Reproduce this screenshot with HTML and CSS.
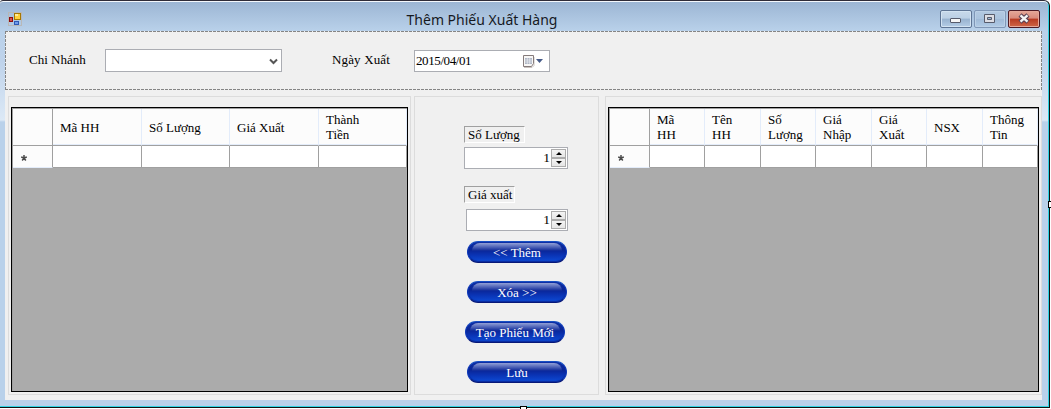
FILE: index.html
```html
<!DOCTYPE html>
<html lang="vi">
<head>
<meta charset="utf-8">
<title>Thêm Phiếu Xuất Hàng</title>
<link rel="stylesheet" href="styles.css">
</head>
<body>
<div class="window">
  <header class="titlebar">
    <svg class="app-icon" width="14" height="14" viewBox="0 0 14 14" shape-rendering="crispEdges">
      <path d="M.5 .5h13v13h-13z" fill="none" stroke="#b8b8b8"/>
      <path d="M1 5h4v5H1z" fill="#8e0d0d"/><path d="M2 6h2v3H2z" fill="#d8504a"/>
      <path d="M6 1h7v7H6z" fill="#a87800"/><path d="M7 2h5v5H7z" fill="#ffd23c"/><path d="M7 2h3v2H7z" fill="#ffec9a"/>
      <path d="M6 9h5v4H6z" fill="#2e59b5"/><path d="M7 10h3v2H7z" fill="#6f9cec"/>
    </svg>
    <h1 class="title">Thêm Phiếu Xuất Hàng</h1>
    <div class="controls">
      <span class="ctl ctl-min"><svg width="30" height="16" viewBox="0 0 30 16"><rect x="9.5" y="7.5" width="10" height="4" rx=".5" fill="#f6f6f6" stroke="#575b6b"/></svg></span>
      <span class="ctl ctl-max"><svg width="30" height="16" viewBox="0 0 30 16"><path d="M9.500 3.500h10v8h-10z" fill="#dcdde4" stroke="#575b6b"/><path d="M12.500 6.500h4v2h-4z" fill="#9fb9d6" stroke="#575b6b"/></svg></span>
      <span class="ctl ctl-close"><svg width="30" height="16" viewBox="0 0 30 16"><path d="M11 4l8 7M19 4l-8 7" stroke="#594052" stroke-width="4.600"/><path d="M11.500 4.400l7 6.200M18.500 4.400l-7 6.200" stroke="#f4f4f4" stroke-width="2.400"/></svg></span>
    </div>
  </header>

  <main class="client">
    <section class="filters">
      <label class="label branch-label">Chi Nhánh</label>
      <div class="combo"><svg width="9" height="8" viewBox="0 0 9 8"><path d="M1 1.500l3.500 3.500L8 1.500" fill="none" stroke="#555" stroke-width="2"/></svg></div>
      <label class="label date-label">Ngày Xuất</label>
      <div class="date"><span>2015/04/01</span>
        <svg width="22" height="14" viewBox="0 0 22 14"><path d="M2 12.500h8l2-2V2" fill="none" stroke="#c9c3c0"/><path d="M1.500 .5h10v8l-2 3h-8z" fill="#f8f7f6" stroke="#857b7b"/><path d="M3 3h7v6H3z" fill="#aeb6c4"/><path d="M3 5h7M3 7h7M5.300 3v6M7.700 3v6" stroke="#f2f4f7" stroke-width=".6"/><path d="M14 4h7l-3.500 4z" fill="#455a88"/></svg>
      </div>
    </section>

    <div class="columns">
      <section class="group">
        <div class="grid grid-export">
          <div class="cell head corner"></div><div class="cell head">Mã HH</div><div class="cell head">Số Lượng</div><div class="cell head">Giá Xuất</div><div class="cell head">Thành<br>Tiền</div>
          <div class="cell mark"><svg width="6" height="6" viewBox="0 0 6 6"><path d="M3 0v3M.2 2L3 3l2.800-1M1.200 5.500L3 3l1.800 2.500" fill="none" stroke="#4c4c4c" stroke-width="1.500"/></svg></div><div class="cell"></div><div class="cell"></div><div class="cell"></div><div class="cell"></div>
        </div>
      </section>

      <section class="group entry">
        <label class="sunken qty-label">Số Lượng</label>
        <div class="spin qty"><span>1</span><i class="arrows"><b class="up"></b><b class="down"></b></i></div>
        <label class="sunken price-label">Giá xuất</label>
        <div class="spin price"><span>1</span><i class="arrows"><b class="up"></b><b class="down"></b></i></div>
        <div class="actions">
          <button class="pill"><span>&lt;&lt; Thêm</span></button>
          <button class="pill"><span>Xóa &gt;&gt;</span></button>
          <button class="pill pill-new"><span>Tạo Phiếu Mới</span></button>
          <button class="pill"><span>Lưu</span></button>
        </div>
      </section>

      <section class="group">
        <div class="grid grid-stock">
          <div class="cell head corner"></div><div class="cell head">Mã<br>HH</div><div class="cell head">Tên<br>HH</div><div class="cell head">Số<br>Lượng</div><div class="cell head">Giá<br>Nhập</div><div class="cell head">Giá<br>Xuất</div><div class="cell head">NSX</div><div class="cell head">Thông<br>Tin</div>
          <div class="cell mark"><svg width="6" height="6" viewBox="0 0 6 6"><path d="M3 0v3M.2 2L3 3l2.800-1M1.200 5.500L3 3l1.800 2.500" fill="none" stroke="#4c4c4c" stroke-width="1.500"/></svg></div><div class="cell"></div><div class="cell"></div><div class="cell"></div><div class="cell"></div><div class="cell"></div><div class="cell"></div><div class="cell"></div>
        </div>
      </section>
    </div>
  </main>
</div>
<span class="handle handle-bottom"></span>
<span class="handle handle-right"></span>
</body>
</html>
```

FILE: styles.css
```css
* { box-sizing: border-box; }
body {
  margin: 0;
  width: 1051px;
  height: 409px;
  overflow: hidden;
  background: #fff;
  position: relative;
  font: 13px/15px "Liberation Serif", serif;
  color: #000;
}
.window {
  width: 1050px;
  height: 408px;
  border: solid #111;
  border-width: 1px 1px 1px 0;
  border-top-color: #2f2c38;
  border-radius: 3px 6px 0 0;
  padding: 0 6px 6px 5px;
  background: linear-gradient(#9bb5d3 0, #b9d1ea 30px, #bfd3eb 60px, #dce9f6 119px, #b9d1ea 121px, #b9d1ea 100%);
  box-shadow: inset -1px -1px 0 #2fd3e2, inset 0 1px 0 #f4f8fc;
}
.titlebar {
  height: 30px;
  display: grid;
  grid-template-columns: 100px 1fr 103px;
  align-items: start;
}
.app-icon { margin: 11px 0 0 3px; }
.title {
  margin: 9px 0 0;
  padding-right: 81px;
  font: 400 14px/20px "Noto Sans", sans-serif;
  color: #16191f;
  text-align: center;
  white-space: nowrap;
}
.controls { display: flex; gap: 2px; padding-top: 9px; justify-content: flex-end; margin-right: 3px; }
.ctl {
  width: 32px;
  height: 18px;
  border: 1px solid #5e7494;
  border-radius: 2px;
  display: block;
  background: linear-gradient(#c8d9ea 0, #bcd0e5 45%, #98b2cf 50%, #b5cde6 100%);
  box-shadow: inset 0 0 0 1px #d3e3f2;
}
.ctl svg { display: block; }
.ctl-max { border-color: #8097b7; background: linear-gradient(#b3c9e1 0, #aac3de 50%, #a0bad7 52%, #b1cbe6 100%); box-shadow: inset 0 0 0 1px #bbd0e6; }
.ctl-close {
  border-color: #4d1a24;
  background: linear-gradient(#e5a798 0, #d98a7b 45%, #b83a22 50%, #cf6647 100%);
  box-shadow: inset 0 0 0 1px #e5a89a;
}
.client { width: 1037px; height: 369px; background: #f0f0f0; }
.filters {
  height: 60px;
  display: flex;
  align-items: flex-start;
  padding-left: 24px;
  background:
    repeating-linear-gradient(90deg, #858585 0 3px, transparent 3px 4px) 0 0 / 100% 1px no-repeat,
    repeating-linear-gradient(90deg, #858585 0 3px, transparent 3px 4px) 0 58px / 100% 1px no-repeat,
    repeating-linear-gradient(#858585 0 3px, transparent 3px 4px) 0 0 / 1px 59px no-repeat,
    repeating-linear-gradient(#858585 0 3px, transparent 3px 4px) 100% 0 / 1px 59px no-repeat;
}
.label { margin-top: 21px; white-space: nowrap; }
.branch-label { width: 76px; }
.combo {
  width: 177px;
  height: 23px;
  margin-top: 18px;
  border: 1px solid #abadb3;
  background: #fff;
  display: flex;
  justify-content: flex-end;
  padding: 8px 3px 0 0;
}
.date-label { margin-left: 50px; width: 82px; letter-spacing: .15px; }
.date {
  width: 136px;
  height: 22px;
  margin-top: 19px;
  border: 1px solid #abadb3;
  background: #fff;
  display: flex;
  justify-content: space-between;
  letter-spacing: -.4px;
  line-height: 20px;
  padding: 0 5px 0 1px;
}
.date svg { margin-top: 4px; }
.columns {
  display: grid;
  grid-template-columns: 403px 185px 440px;
  column-gap: 3px;
  padding: 5px 0 0 3px;
}
.columns > :last-child { margin-left: 3px; }
.group { height: 299px; border: 1px solid #dcdcdc; padding: 10px 2px 2px; }
.grid {
  height: 285px;
  display: grid;
  grid-template-rows: 37px 22px;
  align-content: start;
  border: 1px solid #000;
  background: #ababab;
  padding: 1px 0 0 1px;
  box-shadow: inset 1px 1px 0 #a0a0a0;
}
.grid-export { width: 397px; grid-template-columns: 40px 89px 88px 89px 88px; }
.grid-stock { width: 431px; grid-template-columns: 40px 55px 56px 55px 56px 55px 56px 55px; }
.cell { background: #fff; border: solid #a0a0a0; border-width: 0 1px 1px 0; }
.head {
  background: #fcfcfc;
  display: flex;
  align-items: center;
  padding: 0 0 0 7px;
  border-right-color: #e3ecfa;
  box-shadow: inset 0 -1px 0 #e3ecfa;
  white-space: nowrap;
}
.corner { border-right-color: #a0a0a0; box-shadow: none; }
.mark { background: #fcfcfc; border-bottom-color: #e3ecfa; padding: 9px 0 0 8px; }
.mark svg { display: block; }
.entry { padding: 29px 0 0 49px; display: flex; flex-direction: column; align-items: flex-start; }
.sunken {
  height: 17px;
  border: 1px solid;
  border-color: #a0a0a0 #fff #fff #a0a0a0;
  padding-left: 3px;
  line-height: 16px;
  white-space: nowrap;
}
.qty-label { width: 61px; }
.price-label { width: 51px; margin-top: 17px; }
.spin {
  height: 22px;
  border: 1px solid #abadb3;
  background: #fff;
  display: flex;
  justify-content: flex-end;
  line-height: 17px;
  padding: 1px 1px 1px 0;
}
.spin span { font-size: 13.500px; }
.qty { width: 104px; margin-top: 4px; }
.price { width: 102px; margin: 6px 0 0 2px; }
.arrows { width: 15px; margin-left: 1px; display: grid; grid-template-rows: 9px 9px; }
.arrows b { border: 1px solid #acacac; background: linear-gradient(#f4f4f4, #e5e5e5); display: grid; place-items: center; }
.arrows b::after { content: ""; border: solid transparent; border-width: 0 3px 3px; border-bottom-color: #000; }
.arrows .down::after { border-width: 3px 3px 0; border-top-color: #000; }
.actions { display: grid; gap: 18px; margin: 10px 0 0 3px; }
.pill {
  width: 100px;
  height: 22px;
  padding: 0;
  border: 1px solid #0c37b8;
  border-top-color: #1750c4;
  border-bottom-color: #071878;
  border-radius: 11px;
  background: linear-gradient(#0d2ea6 0, #0a2596 40%, #0a33b4 65%, #0d4cd6 100%);
  box-shadow: inset 0 -1px 1px #0a2a9c;
  color: #fff;
  font: 13px/19px "Liberation Serif", serif;
  white-space: nowrap;
  display: grid;
  place-items: center;
  position: relative;
}
.pill span { position: relative; }
.pill::before {
  content: "";
  position: absolute;
  left: 4px;
  right: 4px;
  top: 1px;
  height: 8px;
  border-radius: 8px 8px 0 0;
  background: linear-gradient(rgba(255,255,255,.55), rgba(255,255,255,0));
}
.pill-new { margin-left: -2px; }
.handle { position: absolute; background: #fff; border: 1px solid #000; }
.handle-bottom { left: 520px; top: 406px; width: 7px; height: 7px; }
.handle-right { left: 1048px; top: 201px; width: 7px; height: 7px; }
```
